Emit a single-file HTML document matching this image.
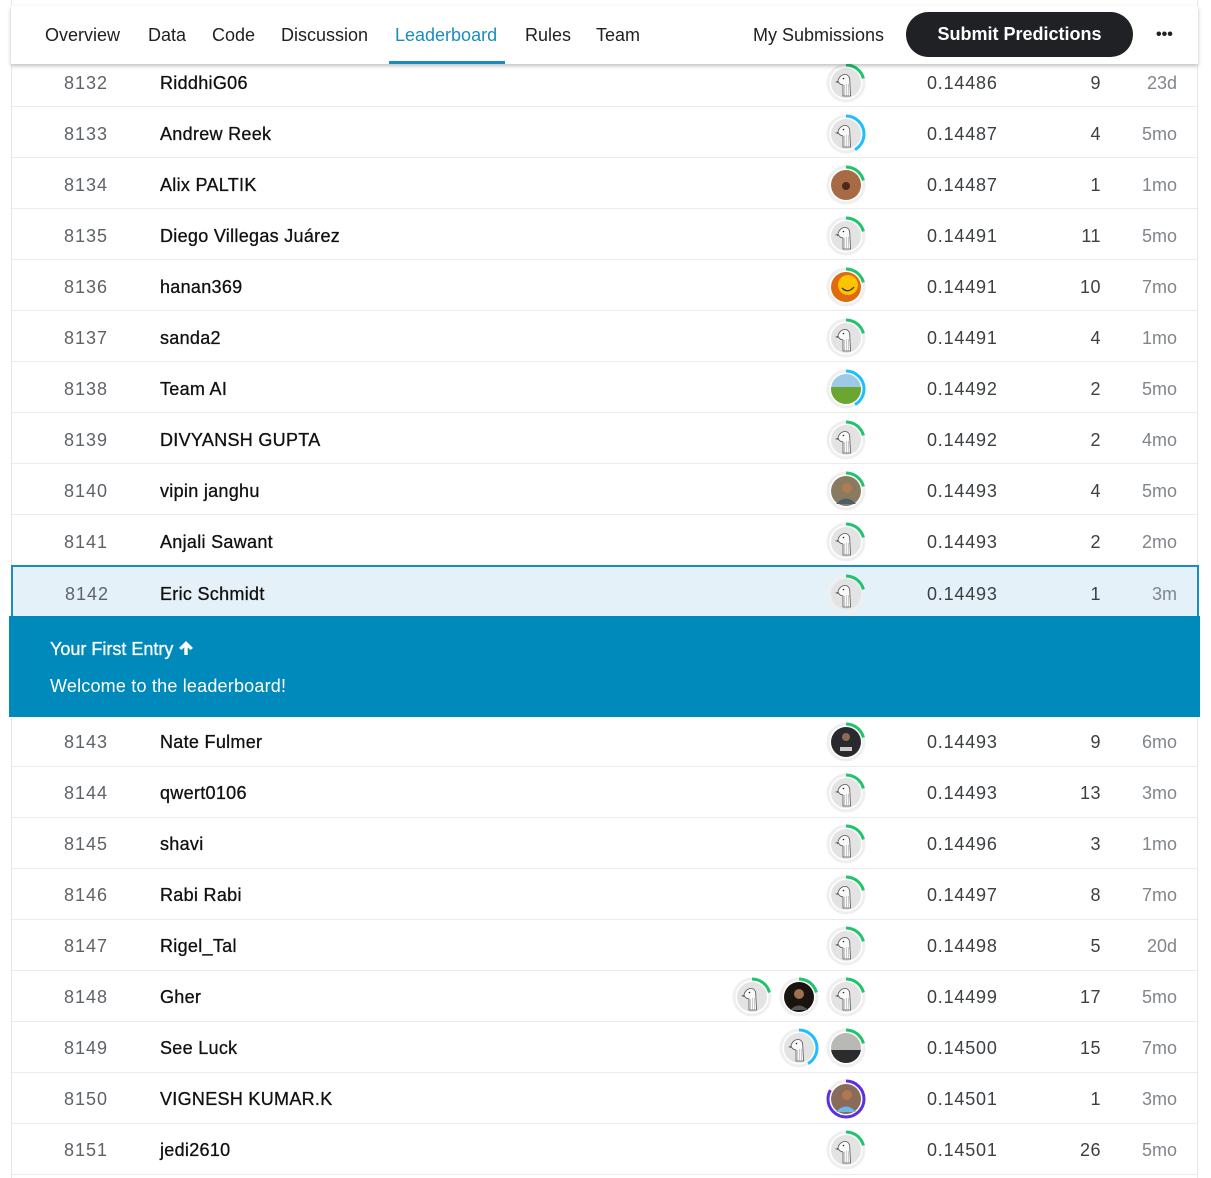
<!DOCTYPE html>
<html><head><meta charset="utf-8"><style>
*{margin:0;padding:0;box-sizing:border-box}
body{width:1211px;height:1178px;background:#fff;font-family:"Liberation Sans",sans-serif;position:relative;overflow:hidden;color:#202124}
.frame{position:absolute;left:11px;top:0;width:1187px;height:1178px;border-left:1px solid #e6e6e6;border-right:1px solid #e6e6e6}
.hd{position:absolute;left:11px;top:6px;width:1187px;height:58px;background:#fff;box-shadow:0 2px 4px rgba(0,0,0,.25);z-index:5}
.tab{position:absolute;top:17px;font-size:18px;line-height:24px;color:#202124}
.ul{position:absolute;left:378px;top:55px;width:116px;height:3px;background:#1a8cbf}
.btn{position:absolute;left:895px;top:6px;width:227px;height:45px;border-radius:23px;background:#202124;color:#fff;font-weight:bold;font-size:18px;line-height:45px;text-align:center}
.dots{position:absolute;left:1145px;top:17px;font-size:16px;line-height:24px;font-weight:bold}
.t{position:absolute;font-size:18px;line-height:24px;height:24px;white-space:nowrap;margin-top:1px}
.rk{right:1103px;color:#5f6368;letter-spacing:1px}
.nm{left:160px;color:#111;letter-spacing:.3px;-webkit-text-stroke:.3px #111}
.sc{left:927px;color:#3c4043;letter-spacing:.8px}
.en{right:110px;color:#3c4043;letter-spacing:.5px}
.lt{right:34px;color:#80868b}
.ln{position:absolute;left:12px;width:1185px;height:1px;background:#ebebeb}
.av{position:absolute;width:40px;height:40px;margin-top:1px}
.hl{position:absolute;left:11px;top:565px;width:1188px;height:52px;background:#e4f1f8;border:2px solid #1a8cbf;border-bottom:none}
.ban{position:absolute;left:9px;top:616px;width:1191px;height:101px;background:#008abc;color:#fff}
</style></head><body>
<svg width="0" height="0" style="position:absolute"><defs>
<g id="g"><circle cx="20" cy="20" r="15" fill="#e3e3e3"/><path d="M17 33 L17 22 C14.5 21.5 12.5 20 12 18 C12.5 14.5 15.5 11.5 19 11.5 C22.5 11.5 24 14.5 23.8 18 L24.5 33 Z" fill="#fafafa" stroke="#555" stroke-width=".8"/><path d="M12 18 L9 19 L12.3 19.8Z" fill="#444"/><circle cx="17.5" cy="15.5" r=".8" fill="#222"/><path d="M18.5 22 L18.5 33 M20.5 21 L20.5 33 M22.5 21 L22.5 33" stroke="#999" stroke-width=".5"/></g>
</defs></svg>
<div class="frame"></div>

<div class="hd">
<span class="tab" style="left:34px">Overview</span>
<span class="tab" style="left:137px">Data</span>
<span class="tab" style="left:201px">Code</span>
<span class="tab" style="left:270px">Discussion</span>
<span class="tab" style="left:384px;color:#1a8cbf">Leaderboard</span>
<span class="tab" style="left:514px">Rules</span>
<span class="tab" style="left:585px">Team</span>
<div class="ul"></div>
<span class="tab" style="left:742px">My Submissions</span>
<div class="btn">Submit Predictions</div>
<span class="dots">•••</span>
</div>

<div class="t rk" style="top:70px">8132</div><div class="t nm" style="top:70px">RiddhiG06</div><div class="t sc" style="top:70px">0.14486</div><div class="t en" style="top:70px">9</div><div class="t lt" style="top:70px">23d</div>
<svg class="av" style="left:826px;top:62px" viewBox="0 0 40 40"><circle cx="20" cy="20" r="18" fill="none" stroke="#efefef" stroke-width="3"/><circle cx="20" cy="20" r="18" fill="none" stroke="#20c46b" stroke-width="3" stroke-dasharray="23.6 200" transform="rotate(-90 20 20)"/><use href="#g"/></svg>
<div class="ln" style="top:106px"></div>

<div class="t rk" style="top:121px">8133</div><div class="t nm" style="top:121px">Andrew Reek</div><div class="t sc" style="top:121px">0.14487</div><div class="t en" style="top:121px">4</div><div class="t lt" style="top:121px">5mo</div>
<svg class="av" style="left:826px;top:113px" viewBox="0 0 40 40"><circle cx="20" cy="20" r="18" fill="none" stroke="#efefef" stroke-width="3"/><circle cx="20" cy="20" r="18" fill="none" stroke="#20beff" stroke-width="3" stroke-dasharray="47 200" transform="rotate(-90 20 20)"/><use href="#g"/></svg>
<div class="ln" style="top:157px"></div>

<div class="t rk" style="top:172px">8134</div><div class="t nm" style="top:172px">Alix PALTIK</div><div class="t sc" style="top:172px">0.14487</div><div class="t en" style="top:172px">1</div><div class="t lt" style="top:172px">1mo</div>
<svg class="av" style="left:826px;top:164px" viewBox="0 0 40 40"><circle cx="20" cy="20" r="18" fill="none" stroke="#efefef" stroke-width="3"/><circle cx="20" cy="20" r="18" fill="none" stroke="#20c46b" stroke-width="3" stroke-dasharray="23.6 200" transform="rotate(-90 20 20)"/><circle cx="20" cy="20" r="15" fill="#a86a45"/><circle cx="20" cy="21" r="4" fill="#4a2a18"/></svg>
<div class="ln" style="top:208px"></div>

<div class="t rk" style="top:223px">8135</div><div class="t nm" style="top:223px">Diego Villegas Juárez</div><div class="t sc" style="top:223px">0.14491</div><div class="t en" style="top:223px">11</div><div class="t lt" style="top:223px">5mo</div>
<svg class="av" style="left:826px;top:215px" viewBox="0 0 40 40"><circle cx="20" cy="20" r="18" fill="none" stroke="#efefef" stroke-width="3"/><circle cx="20" cy="20" r="18" fill="none" stroke="#20c46b" stroke-width="3" stroke-dasharray="23.6 200" transform="rotate(-90 20 20)"/><use href="#g"/></svg>
<div class="ln" style="top:259px"></div>

<div class="t rk" style="top:274px">8136</div><div class="t nm" style="top:274px">hanan369</div><div class="t sc" style="top:274px">0.14491</div><div class="t en" style="top:274px">10</div><div class="t lt" style="top:274px">7mo</div>
<svg class="av" style="left:826px;top:266px" viewBox="0 0 40 40"><circle cx="20" cy="20" r="18" fill="none" stroke="#efefef" stroke-width="3"/><circle cx="20" cy="20" r="18" fill="none" stroke="#20c46b" stroke-width="3" stroke-dasharray="23.6 200" transform="rotate(-90 20 20)"/><circle cx="20" cy="20" r="15" fill="#e06a10"/><circle cx="22" cy="18" r="10" fill="#ffc400"/><path d="M16 21 Q22 27 28 20" stroke="#333" stroke-width="1.3" fill="none"/></svg>
<div class="ln" style="top:310px"></div>

<div class="t rk" style="top:325px">8137</div><div class="t nm" style="top:325px">sanda2</div><div class="t sc" style="top:325px">0.14491</div><div class="t en" style="top:325px">4</div><div class="t lt" style="top:325px">1mo</div>
<svg class="av" style="left:826px;top:317px" viewBox="0 0 40 40"><circle cx="20" cy="20" r="18" fill="none" stroke="#efefef" stroke-width="3"/><circle cx="20" cy="20" r="18" fill="none" stroke="#20c46b" stroke-width="3" stroke-dasharray="23.6 200" transform="rotate(-90 20 20)"/><use href="#g"/></svg>
<div class="ln" style="top:361px"></div>

<div class="t rk" style="top:376px">8138</div><div class="t nm" style="top:376px">Team AI</div><div class="t sc" style="top:376px">0.14492</div><div class="t en" style="top:376px">2</div><div class="t lt" style="top:376px">5mo</div>
<svg class="av" style="left:826px;top:368px" viewBox="0 0 40 40"><circle cx="20" cy="20" r="18" fill="none" stroke="#efefef" stroke-width="3"/><circle cx="20" cy="20" r="18" fill="none" stroke="#20beff" stroke-width="3" stroke-dasharray="47 200" transform="rotate(-90 20 20)"/><clipPath id="c1"><circle cx="20" cy="20" r="15"/></clipPath><g clip-path="url(#c1)"><rect x="5" y="5" width="30" height="30" fill="#9ccbe8"/><rect x="5" y="18" width="30" height="17" fill="#6aa630"/></g></svg>
<div class="ln" style="top:412px"></div>

<div class="t rk" style="top:427px">8139</div><div class="t nm" style="top:427px">DIVYANSH GUPTA</div><div class="t sc" style="top:427px">0.14492</div><div class="t en" style="top:427px">2</div><div class="t lt" style="top:427px">4mo</div>
<svg class="av" style="left:826px;top:419px" viewBox="0 0 40 40"><circle cx="20" cy="20" r="18" fill="none" stroke="#efefef" stroke-width="3"/><circle cx="20" cy="20" r="18" fill="none" stroke="#20c46b" stroke-width="3" stroke-dasharray="23.6 200" transform="rotate(-90 20 20)"/><use href="#g"/></svg>
<div class="ln" style="top:463px"></div>

<div class="t rk" style="top:478px">8140</div><div class="t nm" style="top:478px">vipin janghu</div><div class="t sc" style="top:478px">0.14493</div><div class="t en" style="top:478px">4</div><div class="t lt" style="top:478px">5mo</div>
<svg class="av" style="left:826px;top:470px" viewBox="0 0 40 40"><circle cx="20" cy="20" r="18" fill="none" stroke="#efefef" stroke-width="3"/><circle cx="20" cy="20" r="18" fill="none" stroke="#20c46b" stroke-width="3" stroke-dasharray="23.6 200" transform="rotate(-90 20 20)"/><circle cx="20" cy="20" r="15" fill="#8a7a60"/><circle cx="21" cy="17" r="5" fill="#b07a55"/><path d="M10 33 Q20 22 30 33Z" fill="#4a5e6a"/></svg>
<div class="ln" style="top:514px"></div>

<div class="t rk" style="top:529px">8141</div><div class="t nm" style="top:529px">Anjali Sawant</div><div class="t sc" style="top:529px">0.14493</div><div class="t en" style="top:529px">2</div><div class="t lt" style="top:529px">2mo</div>
<svg class="av" style="left:826px;top:521px" viewBox="0 0 40 40"><circle cx="20" cy="20" r="18" fill="none" stroke="#efefef" stroke-width="3"/><circle cx="20" cy="20" r="18" fill="none" stroke="#20c46b" stroke-width="3" stroke-dasharray="23.6 200" transform="rotate(-90 20 20)"/><use href="#g"/></svg>

<div class="hl"></div>
<div class="t rk" style="top:581px;right:1102px">8142</div><div class="t nm" style="top:581px">Eric Schmidt</div><div class="t sc" style="top:581px">0.14493</div><div class="t en" style="top:581px">1</div><div class="t lt" style="top:581px">3m</div>
<svg class="av" style="left:826px;top:573px" viewBox="0 0 40 40"><circle cx="20" cy="20" r="18" fill="none" stroke="#efefef" stroke-width="3"/><circle cx="20" cy="20" r="18" fill="none" stroke="#20c46b" stroke-width="3" stroke-dasharray="23.6 200" transform="rotate(-90 20 20)"/><use href="#g"/></svg>

<div class="ban">
<div style="position:absolute;left:41px;top:21px;font-size:18px;line-height:24px;-webkit-text-stroke:.3px #fff">Your First Entry <svg width="16" height="16" viewBox="0 0 16 16" style="vertical-align:-1px"><path d="M8 1 L15 8 L12.5 10 L9.7 7.2 V15 H6.3 V7.2 L3.5 10 L1 8 Z" fill="#fff"/></svg></div>
<div style="position:absolute;left:41px;top:58px;font-size:18px;line-height:24px;letter-spacing:.2px">Welcome to the leaderboard!</div>
</div>

<div class="t rk" style="top:729px">8143</div><div class="t nm" style="top:729px">Nate Fulmer</div><div class="t sc" style="top:729px">0.14493</div><div class="t en" style="top:729px">9</div><div class="t lt" style="top:729px">6mo</div>
<svg class="av" style="left:826px;top:721px" viewBox="0 0 40 40"><circle cx="20" cy="20" r="18" fill="none" stroke="#efefef" stroke-width="3"/><circle cx="20" cy="20" r="18" fill="none" stroke="#20c46b" stroke-width="3" stroke-dasharray="23.6 200" transform="rotate(-90 20 20)"/><circle cx="20" cy="20" r="15" fill="#2a2a2e"/><circle cx="20" cy="15" r="4" fill="#8a6a58"/><rect x="14" y="25" width="12" height="4" fill="#ccc"/></svg>
<div class="ln" style="top:766px"></div>

<div class="t rk" style="top:780px">8144</div><div class="t nm" style="top:780px">qwert0106</div><div class="t sc" style="top:780px">0.14493</div><div class="t en" style="top:780px">13</div><div class="t lt" style="top:780px">3mo</div>
<svg class="av" style="left:826px;top:772px" viewBox="0 0 40 40"><circle cx="20" cy="20" r="18" fill="none" stroke="#efefef" stroke-width="3"/><circle cx="20" cy="20" r="18" fill="none" stroke="#20c46b" stroke-width="3" stroke-dasharray="23.6 200" transform="rotate(-90 20 20)"/><use href="#g"/></svg>
<div class="ln" style="top:817px"></div>

<div class="t rk" style="top:831px">8145</div><div class="t nm" style="top:831px">shavi</div><div class="t sc" style="top:831px">0.14496</div><div class="t en" style="top:831px">3</div><div class="t lt" style="top:831px">1mo</div>
<svg class="av" style="left:826px;top:823px" viewBox="0 0 40 40"><circle cx="20" cy="20" r="18" fill="none" stroke="#efefef" stroke-width="3"/><circle cx="20" cy="20" r="18" fill="none" stroke="#20c46b" stroke-width="3" stroke-dasharray="23.6 200" transform="rotate(-90 20 20)"/><use href="#g"/></svg>
<div class="ln" style="top:868px"></div>

<div class="t rk" style="top:882px">8146</div><div class="t nm" style="top:882px">Rabi Rabi</div><div class="t sc" style="top:882px">0.14497</div><div class="t en" style="top:882px">8</div><div class="t lt" style="top:882px">7mo</div>
<svg class="av" style="left:826px;top:874px" viewBox="0 0 40 40"><circle cx="20" cy="20" r="18" fill="none" stroke="#efefef" stroke-width="3"/><circle cx="20" cy="20" r="18" fill="none" stroke="#20c46b" stroke-width="3" stroke-dasharray="23.6 200" transform="rotate(-90 20 20)"/><use href="#g"/></svg>
<div class="ln" style="top:919px"></div>

<div class="t rk" style="top:933px">8147</div><div class="t nm" style="top:933px">Rigel_Tal</div><div class="t sc" style="top:933px">0.14498</div><div class="t en" style="top:933px">5</div><div class="t lt" style="top:933px">20d</div>
<svg class="av" style="left:826px;top:925px" viewBox="0 0 40 40"><circle cx="20" cy="20" r="18" fill="none" stroke="#efefef" stroke-width="3"/><circle cx="20" cy="20" r="18" fill="none" stroke="#20c46b" stroke-width="3" stroke-dasharray="23.6 200" transform="rotate(-90 20 20)"/><use href="#g"/></svg>
<div class="ln" style="top:970px"></div>

<div class="t rk" style="top:984px">8148</div><div class="t nm" style="top:984px">Gher</div><div class="t sc" style="top:984px">0.14499</div><div class="t en" style="top:984px">17</div><div class="t lt" style="top:984px">5mo</div>
<svg class="av" style="left:732px;top:976px" viewBox="0 0 40 40"><circle cx="20" cy="20" r="18" fill="none" stroke="#efefef" stroke-width="3"/><circle cx="20" cy="20" r="18" fill="none" stroke="#20c46b" stroke-width="3" stroke-dasharray="23.6 200" transform="rotate(-90 20 20)"/><use href="#g"/></svg>
<svg class="av" style="left:779px;top:976px" viewBox="0 0 40 40"><circle cx="20" cy="20" r="18" fill="none" stroke="#efefef" stroke-width="3"/><circle cx="20" cy="20" r="18" fill="none" stroke="#20c46b" stroke-width="3" stroke-dasharray="23.6 200" transform="rotate(-90 20 20)"/><circle cx="20" cy="20" r="15" fill="#1a1410"/><circle cx="20" cy="17" r="5" fill="#a07050"/><path d="M11 33 Q20 24 29 33Z" fill="#555"/></svg>
<svg class="av" style="left:826px;top:976px" viewBox="0 0 40 40"><circle cx="20" cy="20" r="18" fill="none" stroke="#efefef" stroke-width="3"/><circle cx="20" cy="20" r="18" fill="none" stroke="#20c46b" stroke-width="3" stroke-dasharray="23.6 200" transform="rotate(-90 20 20)"/><use href="#g"/></svg>
<div class="ln" style="top:1021px"></div>

<div class="t rk" style="top:1035px">8149</div><div class="t nm" style="top:1035px">See Luck</div><div class="t sc" style="top:1035px">0.14500</div><div class="t en" style="top:1035px">15</div><div class="t lt" style="top:1035px">7mo</div>
<svg class="av" style="left:779px;top:1027px" viewBox="0 0 40 40"><circle cx="20" cy="20" r="18" fill="none" stroke="#efefef" stroke-width="3"/><circle cx="20" cy="20" r="18" fill="none" stroke="#20beff" stroke-width="3" stroke-dasharray="47 200" transform="rotate(-90 20 20)"/><use href="#g"/></svg>
<svg class="av" style="left:826px;top:1027px" viewBox="0 0 40 40"><circle cx="20" cy="20" r="18" fill="none" stroke="#efefef" stroke-width="3"/><circle cx="20" cy="20" r="18" fill="none" stroke="#20c46b" stroke-width="3" stroke-dasharray="23.6 200" transform="rotate(-90 20 20)"/><clipPath id="c2"><circle cx="20" cy="20" r="15"/></clipPath><g clip-path="url(#c2)"><rect x="5" y="5" width="30" height="30" fill="#b8b8b4"/><rect x="5" y="22" width="30" height="13" fill="#2a2c2e"/></g></svg>
<div class="ln" style="top:1072px"></div>

<div class="t rk" style="top:1086px">8150</div><div class="t nm" style="top:1086px">VIGNESH KUMAR.K</div><div class="t sc" style="top:1086px">0.14501</div><div class="t en" style="top:1086px">1</div><div class="t lt" style="top:1086px">3mo</div>
<svg class="av" style="left:826px;top:1078px" viewBox="0 0 40 40"><circle cx="20" cy="20" r="18" fill="none" stroke="#efefef" stroke-width="3"/><circle cx="20" cy="20" r="18" fill="none" stroke="#5c2fe0" stroke-width="3" stroke-dasharray="94 200" transform="rotate(-90 20 20)"/><circle cx="20" cy="20" r="15" fill="#8a6a5a"/><circle cx="21" cy="16" r="5" fill="#b07850"/><path d="M10 33 Q20 22 30 33Z" fill="#6ab8e8"/></svg>
<div class="ln" style="top:1123px"></div>

<div class="t rk" style="top:1137px">8151</div><div class="t nm" style="top:1137px">jedi2610</div><div class="t sc" style="top:1137px">0.14501</div><div class="t en" style="top:1137px">26</div><div class="t lt" style="top:1137px">5mo</div>
<svg class="av" style="left:826px;top:1129px" viewBox="0 0 40 40"><circle cx="20" cy="20" r="18" fill="none" stroke="#efefef" stroke-width="3"/><circle cx="20" cy="20" r="18" fill="none" stroke="#20c46b" stroke-width="3" stroke-dasharray="23.6 200" transform="rotate(-90 20 20)"/><use href="#g"/></svg>
<div class="ln" style="top:1174px"></div>
</body></html>
